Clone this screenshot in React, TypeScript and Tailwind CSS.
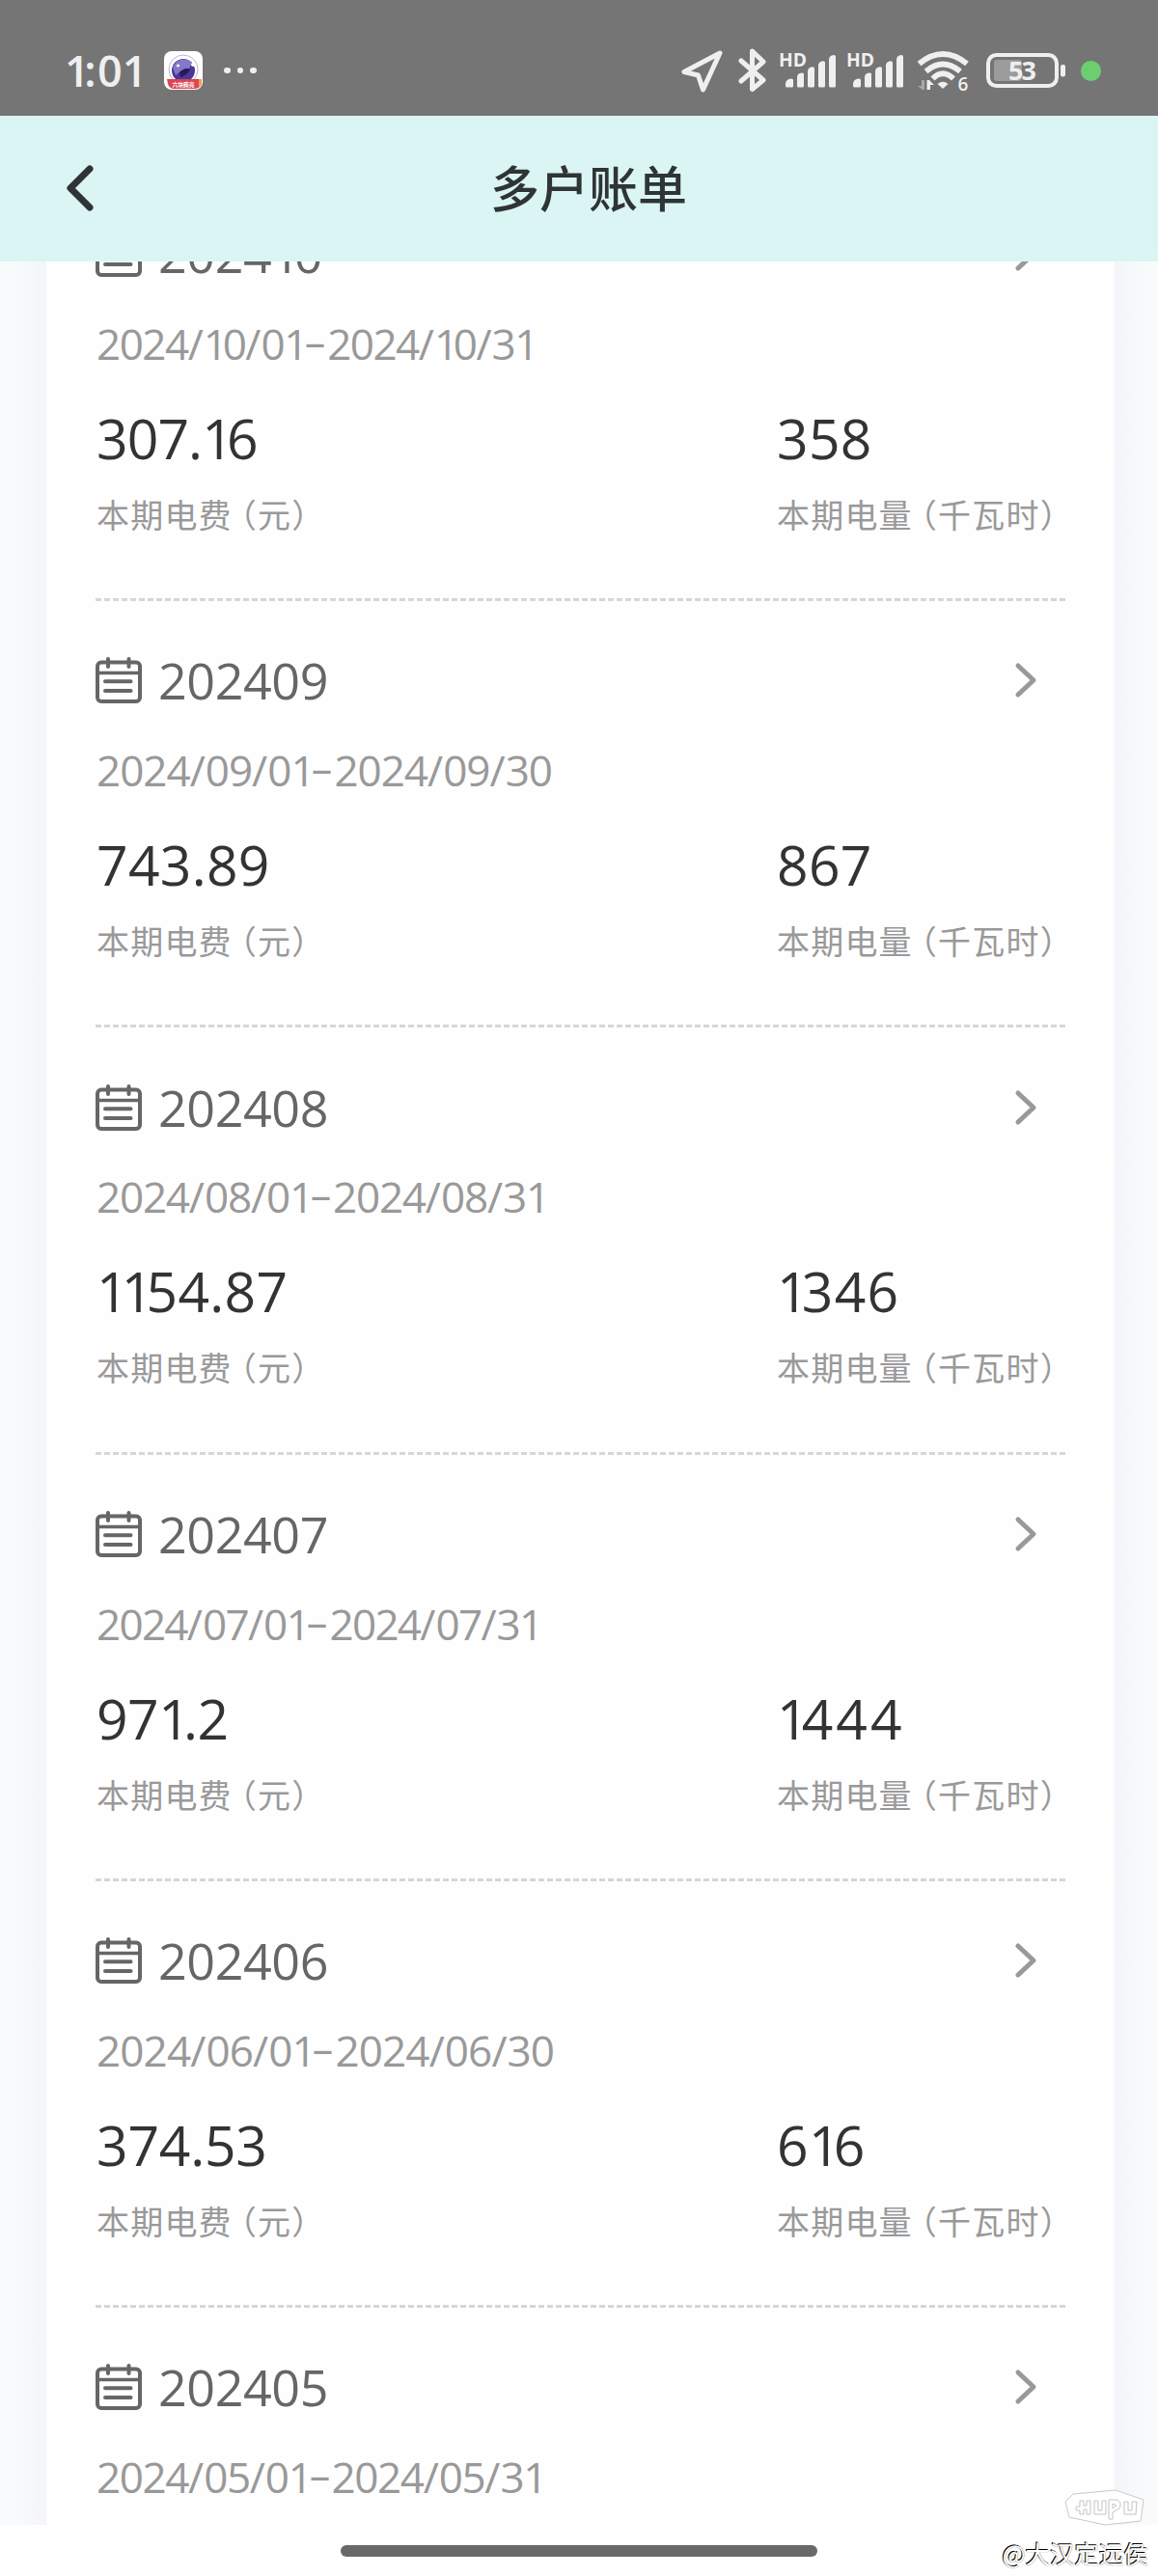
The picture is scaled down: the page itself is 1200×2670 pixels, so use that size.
import React from 'react';

interface Bill {
  month: string;
  period: string;
  fee: string;
  usage: string;
  periodTracking: string;
  feeTracking?: string;
  usageTracking?: string;
}

const bills: Bill[] = [
  {
    month: '202410',
    period: '2024/10/01-2024/10/31',
    fee: '307.16',
    usage: '358',
    periodTracking: 'tracking-[-1.500px]',
    feeTracking: 'tracking-[-0.900px]',
  },
  { month: '202409', period: '2024/09/01-2024/09/30', fee: '743.89', usage: '867', periodTracking: 'tracking-[-1px]' },
  {
    month: '202408',
    period: '2024/08/01-2024/08/31',
    fee: '1154.87',
    usage: '1346',
    periodTracking: 'tracking-[-1.200px]',
    usageTracking: 'tracking-[1.300px]',
  },
  {
    month: '202407',
    period: '2024/07/01-2024/07/31',
    fee: '971.2',
    usage: '1444',
    periodTracking: 'tracking-[-1.700px]',
    feeTracking: 'tracking-[-0.500px]',
    usageTracking: 'tracking-[3px]',
  },
  {
    month: '202406',
    period: '2024/06/01-2024/06/30',
    fee: '374.53',
    usage: '616',
    periodTracking: 'tracking-[-0.850px]',
    feeTracking: 'tracking-[-0.200px]',
  },
  { month: '202405', period: '2024/05/01-2024/05/31', fee: '', usage: '', periodTracking: 'tracking-[-1.400px]' },
];

// The font's digits are tabular, so a "1" is tracked tighter to sit like a proportional one.
function Digits({ text }: { text: string }) {
  return (
    <>
      {text.split(/([1/-])/).map((part, i) => {
        if (part === '1') return <span key={i} className="tracking-[-0.12em]">1</span>;
        if (part === '/') return <span key={i} className="tracking-normal">/</span>;
        if (part === '-') {
          return (
            <span key={i} className="inline-block w-[0.57em] -translate-y-[0.06em] scale-x-170 text-center tracking-normal">
              -
            </span>
          );
        }
        return part;
      })}
    </>
  );
}

function CalendarIcon() {
  return (
    <svg viewBox="0 0 48 48" className="w-12 h-12 shrink-0" fill="none" stroke="#666" strokeWidth={4} strokeLinecap="round">
      <rect x="2" y="5.500" width="44" height="40.500" rx="4" />
      <path d="M2 16.500H46" strokeWidth={3.500} />
      <path d="M13 2V10M34.500 2V10" />
      <path d="M10 25.200H36.500M10 35H36.500" />
    </svg>
  );
}

function Signal() {
  return (
    <svg viewBox="0 0 60 38" className="w-[60px] h-[38px] overflow-visible" fill="#efefef">
      <text
        x="-1"
        y="14.500"
        fontSize="20"
        fontWeight="700"
        fontFamily="'Open Sans', sans-serif"
        textLength="29"
        lengthAdjust="spacingAndGlyphs"
      >
        HD
      </text>
      <path d="M6 33Q6 28 12 27.400Q14 27.400 14 29V35Q14 36.500 12.500 36.500H7.500Q6 36.500 6 35Z" />
      <path d="M18 26Q18 22 23 21.600Q25 21.600 25 23V35Q25 36.500 23.500 36.500H19.500Q18 36.500 18 35Z" />
      <path d="M29 20Q29 15.600 34 15.200Q36 15.200 36 17V35Q36 36.500 34.500 36.500H30.500Q29 36.500 29 35Z" />
      <path d="M40 14Q40 9.600 45 9.200Q47 9.200 47 11V35Q47 36.500 45.500 36.500H41.500Q40 36.500 40 35Z" />
      <path d="M51 8Q51 3.600 56 3Q58 3 58 5V35Q58 36.500 56.500 36.500H52.500Q51 36.500 51 35Z" />
    </svg>
  );
}

function StatusBar() {
  return (
    <div className="flex h-[120px] shrink-0 items-center bg-[#757575] pl-[67px] pr-[59px] pt-[26px]">
      <span className="w-[103px] text-[45px] leading-[60px] font-semibold text-[#efefef] font-['Open_Sans'] whitespace-nowrap">
        <span className="tracking-[-0.12em]">1</span>
        <span className="tracking-[0.03em]">:</span>0
        <span className="tracking-[-0.12em]">1</span>
      </span>
      <svg viewBox="0 0 40 40" className="w-10 h-10 overflow-visible">
        <rect width="40" height="40" rx="8" fill="#fff" />
        <circle cx="20" cy="19" r="15" fill="#fff" stroke="#b9b4cf" strokeWidth={1} />
        <circle cx="20" cy="20" r="12" fill="#4b3795" />
        <path d="M9 17A12 12 0 0 1 29 12L26 18Q18 19 12 25Z" fill="#8478c8" />
        <path d="M16 22Q22 16 27 19Q24 25 17 27Z" fill="#29185c" />
        <circle cx="14.500" cy="15" r="1.500" fill="#fff" />
        <circle cx="30" cy="14" r="2" fill="#fff" />
        <path d="M3 29H38V34Q37 39 31 39H9Q5 38 4 34Z" fill="#dc4553" />
        <path d="M36 29H39V34Q38 37 36 38Z" fill="#f1a04a" />
        <text x="8.500" y="36.500" fontSize="5.800" fontWeight="700" fill="#fff" textLength="23" fontFamily="'Noto Sans CJK SC', sans-serif">
          六块腾亮
        </text>
      </svg>
      <div className="ml-[22px] flex gap-[7px]">
        <i className="size-[6.500px] rounded-full bg-[#efefef]" />
        <i className="size-[6.500px] rounded-full bg-[#efefef]" />
        <i className="size-[6.500px] rounded-full bg-[#efefef]" />
      </div>
      <div className="ml-auto flex items-center">
        <svg viewBox="0 0 44 46" className="w-11 h-[46px]" fill="none" stroke="#efefef" strokeWidth={5} strokeLinejoin="round">
          <path d="M40 5L3 24.500L17.500 28L22.500 43Z" />
        </svg>
        <svg viewBox="0 0 30 46" className="ml-[15px] w-[30px] h-[46px]" fill="none" stroke="#efefef" strokeWidth={5} strokeLinecap="round" strokeLinejoin="round">
          <path d="M3 13L26 33L14.500 42.500V3L26 14L3 34" />
        </svg>
        <div className="ml-[13px] flex gap-[10px]">
          <Signal />
          <Signal />
        </div>
        <svg viewBox="0 0 56 44" className="ml-[11px] w-14 h-11 overflow-visible" fill="none" stroke="#efefef" strokeWidth={5.800}>
          <path d="M3.500 15Q28 -5 53 15" />
          <path d="M10.500 23Q28 8 46 23" />
          <path d="M17.500 30.500Q28 20 39 30.500" />
          <path d="M28 41L22.500 36Q28 31.500 33.500 36Z" fill="#efefef" stroke="none" />
          <path d="M9 32V42H7L2 38H6V32Z" fill="#a8a8a8" stroke="none" />
          <path d="M11.500 42V32H14L19 37H15V42Z" fill="#efefef" stroke="none" />
          <text x="43.500" y="42.500" fontSize="19" fontWeight="600" fill="#efefef" stroke="none" fontFamily="'Open Sans', sans-serif">6</text>
        </svg>
        <svg viewBox="0 0 84 38" className="ml-[16px] w-[84px] h-[38px]">
          <rect x="3" y="3" width="71" height="32" rx="8.500" fill="none" stroke="#efefef" strokeWidth={4} />
          <rect x="9" y="8" width="29" height="22" rx="3" fill="#9b9b9b" />
          <rect x="78" y="13" width="5" height="12.500" rx="2" fill="#efefef" />
          <text x="24" y="28.500" fontSize="27" fontWeight="700" fill="#efefef" fontFamily="'Open Sans', sans-serif" textLength="29">53</text>
        </svg>
        <i className="ml-[15px] size-[21px] rounded-full bg-[#6bcf72]" />
      </div>
    </div>
  );
}

interface AmountProps {
  value: string;
  name: string;
  unit: string;
  tracking?: string;
}

function Amount({ value, name, unit, tracking = 'tracking-[0.300px]' }: AmountProps) {
  return (
    <div>
      <div className={`h-[70px] pl-px text-[57px] leading-[70px] text-[#333] font-['Open_Sans'] ${tracking}`}>
        <Digits text={value} />
      </div>
      <div className="mt-[19px] h-[50px] pl-px text-[34px] leading-[50px] tracking-[1.200px] text-[#999] whitespace-nowrap">
        {name}
        <span className="-ml-[9px]">（</span>
        {unit}）
      </div>
    </div>
  );
}

function BillItem({ bill }: { bill: Bill }) {
  return (
    <div className="h-[442.300px] shrink-0">
      <div className="flex items-center pt-[54.800px] pr-[29px]">
        <CalendarIcon />
        <span className="ml-[17px] h-[56px] flex-1 text-[52px] leading-[55px] tracking-[-0.400px] text-[#666] font-['Open_Sans']">
          <Digits text={bill.month} />
        </span>
        <svg viewBox="0 0 24 38" className="w-6 h-[38px]" fill="none" stroke="#999" strokeWidth={5} strokeLinecap="round" strokeLinejoin="round">
          <path d="M4 4L20 19L4 34" />
        </svg>
      </div>
      <div className={`mt-[36.700px] h-[56px] pl-px text-[44px] leading-[56px] text-[#999] font-['Open_Sans'] whitespace-nowrap ${bill.periodTracking}`}>
        <Digits text={bill.period} />
      </div>
      {bill.fee && (
        <>
          <div className="mt-[35px] grid grid-cols-[705px_1fr]">
            <Amount value={bill.fee} name="本期电费" unit="元" tracking={bill.feeTracking} />
            <Amount value={bill.usage} name="本期电量" unit="千瓦时" tracking={bill.usageTracking} />
          </div>
          <div className="mt-[62.500px] h-[3px] bg-[repeating-linear-gradient(90deg,#d6d6d6_0_6px,transparent_6px_9px)]" />
        </>
      )}
    </div>
  );
}

export default function App() {
  return (
    <div className="relative flex h-[2670px] w-[1200px] flex-col overflow-hidden bg-white font-['Noto_Sans_CJK_SC',sans-serif]">
      <StatusBar />
      <header className="flex h-[151px] shrink-0 items-center bg-linear-to-b from-[#dbf5f5] from-90% to-[#d9f6f2] pl-[67px]">
        <svg viewBox="0 0 32 50" className="w-8 h-[50px]" fill="none" stroke="#2f3435" strokeWidth={7} strokeLinecap="round" strokeLinejoin="round">
          <path d="M26 4L6 24L26 44" />
        </svg>
        <h1 className="ml-[409px] -mt-[5px] text-[51px] leading-none font-medium text-[#2f3435]">多户账单</h1>
      </header>

      <main className="flex h-[2346px] shrink-0 overflow-hidden">
        <div className="w-12 shrink-0 bg-linear-to-r from-[#f9fafc] from-40% to-[#f4f5f8]" />
        <div className="flex w-[1107px] shrink-0 flex-col bg-[#fefefe] pl-[51px] pr-[51px]">
          <div className="-mt-[90.800px]" />
          {bills.map((bill) => (
            <BillItem key={bill.month} bill={bill} />
          ))}
        </div>
        <div className="flex-1 bg-linear-to-r from-[#f4f5f8] to-[#f9fafc] to-60%" />
      </main>

      <div className="flex h-[53px] justify-center pt-[21px]">
        <div className="h-3 w-[494px] rounded-full bg-[#696969]" />
      </div>

      <div className="absolute bottom-[4px] right-[10px] flex flex-col items-end">
        <svg viewBox="0 0 84 38" className="mr-[3px] w-[84px] h-[38px]" fill="#fff" stroke="#c9c9c9" strokeWidth={1}>
          <path d="M9 5L53 1L82 11L79 33L42 37L5 29L1 13Z" />
          <g stroke="#c4c4c4">
            <path d="M12 18H16V12H20V17H23V12H27V26H23V21H20V26H16V22H12Z" />
            <path d="M31 12H35V22H39V12H43V26H31Z" />
            <path d="M46 11H55Q60 14 57 20L50 24V31H46ZM50 15V20L54 17Z" />
            <path d="M62 13H66V22H70V13H75L74 26H62Z" />
          </g>
        </svg>
        <span className="mt-[8px] text-[25.500px] leading-[40px] text-white whitespace-nowrap [text-shadow:-1px_-1px_0_#000,0_0_1px_#444]">@大汉定远侯</span>
      </div>
    </div>
  );
}
